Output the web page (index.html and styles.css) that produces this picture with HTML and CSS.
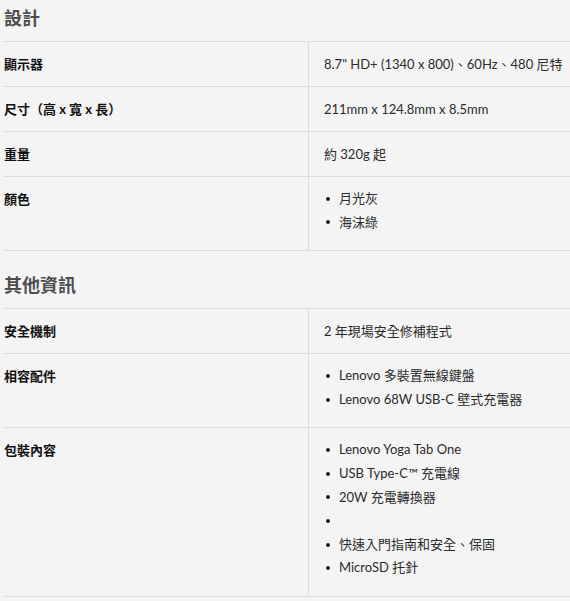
FILE: index.html
```html
<!DOCTYPE html>
<html lang="zh-Hant">
<head>
<meta charset="utf-8">
<link rel="stylesheet" href="styles.css">
</head>
<body>
<div class="specs">
  <section class="group">
    <h2 class="group-title">設計</h2>
    <div class="rows">
      <div class="row"><div class="label">顯示器</div><div class="value">8.7" HD+ (1340 x 800)、60Hz、480 尼特</div></div>
      <div class="row"><div class="label">尺寸（高 x 寬 x 長）</div><div class="value">211mm x 124.8mm x 8.5mm</div></div>
      <div class="row"><div class="label">重量</div><div class="value">約 320g 起</div></div>
      <div class="row"><div class="label">顏色</div><div class="value"><ul class="list"><li>月光灰</li><li>海沫綠</li></ul></div></div>
    </div>
  </section>
  <section class="group">
    <h2 class="group-title">其他資訊</h2>
    <div class="rows">
      <div class="row"><div class="label">安全機制</div><div class="value">2 年現場安全修補程式</div></div>
      <div class="row"><div class="label">相容配件</div><div class="value"><ul class="list"><li>Lenovo 多裝置無線鍵盤</li><li>Lenovo 68W USB-C 壁式充電器</li></ul></div></div>
      <div class="row"><div class="label">包裝內容</div><div class="value"><ul class="list"><li>Lenovo Yoga Tab One</li><li>USB Type-C™ 充電線</li><li>20W 充電轉換器</li><li></li><li>快速入門指南和安全、保固</li><li>MicroSD 托針</li></ul></div></div>
    </div>
  </section>
</div>
</body>
</html>
```

FILE: styles.css
```css
html, body {
  margin: 0;
  padding: 0;
  background: #f4f4f4;
}
body {
  font-family: Lato, "Noto Sans CJK TC", sans-serif;
  font-size: 13px;
  color: #2b2b2b;
}
.specs {
  padding-left: 4px;
}
.group + .group {
  margin-top: 16px;
}
.group-title {
  margin: 0;
  padding: 4px 0 9px;
  font-size: 18px;
  line-height: 28px;
  font-weight: 700;
  color: #4d4d4d;
}
.rows {
  border-bottom: 1px solid #dcdcdc;
}
.row {
  display: grid;
  grid-template-columns: 305px 1fr;
  border-top: 1px solid #dcdcdc;
}
.label {
  padding: 10px 0;
  line-height: 24px;
  font-weight: 700;
  color: #111;
  border-right: 1px solid #dcdcdc;
}
.value {
  padding: 10px 0 10px 15px;
  line-height: 24px;
}
.list {
  list-style: none;
  margin: 0 0 6px;
  padding: 0;
}
.list li {
  display: flex;
  align-items: center;
  min-height: 23.6px;
  line-height: 23.6px;
}
.list li::before {
  content: "";
  width: 4px;
  height: 4px;
  border-radius: 50%;
  background: #222;
  margin: 0 9px 0 2px;
  flex: none;
}
```
